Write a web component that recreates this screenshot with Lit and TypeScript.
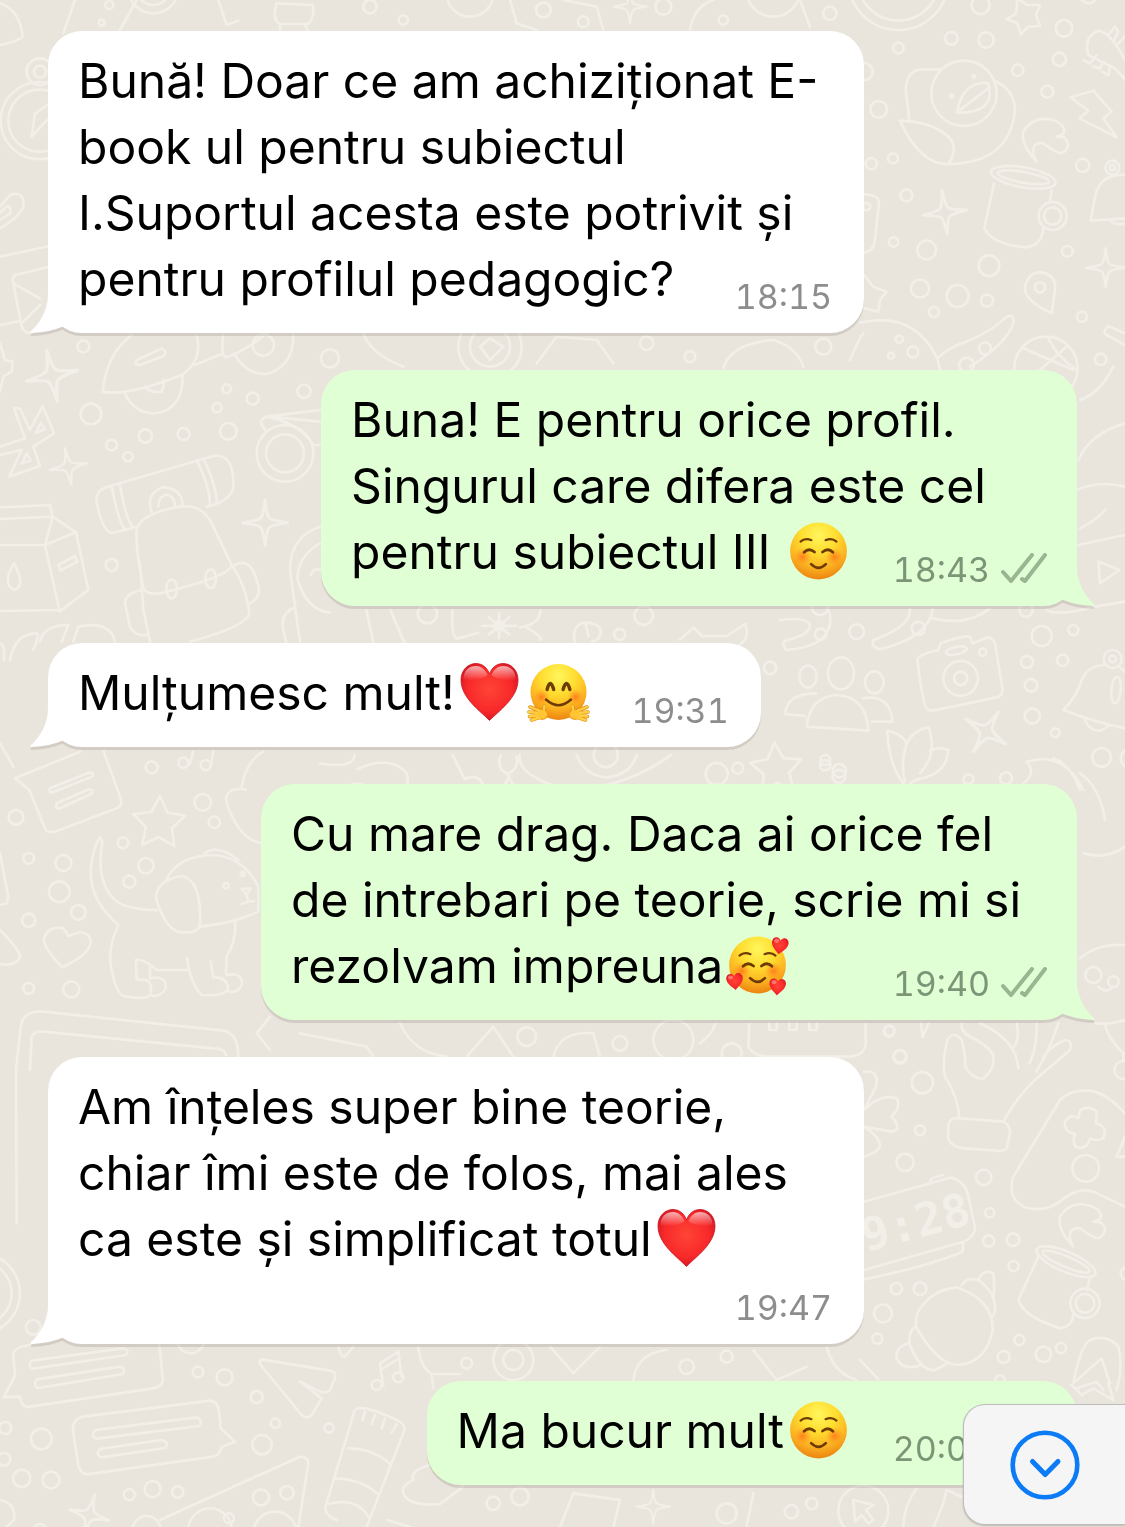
import { LitElement, html, svg, css, nothing } from "lit";
import { customElement, property } from "lit/decorators.js";

type EmojiName = "smile" | "heart" | "hug" | "hearts";
type Piece = string | { emoji: EmojiName };

interface Message {
  side: "in" | "out";
  time: string;
  wide?: boolean;
  timeBelow?: boolean;
  lines: Piece[][];
}

const messages: Message[] = [
  {
    side: "in",
    time: "18:15",
    wide: true,
    lines: [
      ["Bună! Doar ce am achiziționat E-"],
      ["book ul pentru subiectul"],
      ["I.Suportul acesta este potrivit și"],
      ["pentru profilul pedagogic?"],
    ],
  },
  {
    side: "out",
    time: "18:43",
    lines: [
      ["Buna! E pentru orice profil."],
      ["Singurul care difera este cel"],
      ["pentru subiectul III ", { emoji: "smile" }],
    ],
  },
  { side: "in", time: "19:31", lines: [["Mulțumesc mult!", { emoji: "heart" }, { emoji: "hug" }]] },
  {
    side: "out",
    time: "19:40",
    wide: true,
    lines: [
      ["Cu mare drag. Daca ai orice fel"],
      ["de intrebari pe teorie, scrie mi si"],
      ["rezolvam impreuna", { emoji: "hearts" }],
    ],
  },
  {
    side: "in",
    time: "19:47",
    wide: true,
    timeBelow: true,
    lines: [
      ["Am înțeles super bine teorie,"],
      ["chiar îmi este de folos, mai ales"],
      ["ca este și simplificat totul", { emoji: "heart" }],
    ],
  },
  { side: "out", time: "20:01", lines: [["Ma bucur mult", { emoji: "smile" }]] },
];

/* ---------- emoji ---------- */

const faceDefs = svg`
  <defs>
    <radialGradient id="face" cx="50%" cy="22%" r="78%">
      <stop offset="0" stop-color="#fff65c"></stop>
      <stop offset=".4" stop-color="#ffdd30"></stop>
      <stop offset=".72" stop-color="#fcb522"></stop>
      <stop offset="1" stop-color="#ec8410"></stop>
    </radialGradient>
    <radialGradient id="cheek">
      <stop offset="0" stop-color="#ff6f1a" stop-opacity=".8"></stop>
      <stop offset="1" stop-color="#ff8a1e" stop-opacity="0"></stop>
    </radialGradient>
    <radialGradient id="red" cx="50%" cy="45%" r="65%">
      <stop offset="0" stop-color="#ff4436"></stop>
      <stop offset=".6" stop-color="#f8292a"></stop>
      <stop offset="1" stop-color="#c30f1d"></stop>
    </radialGradient>
    <linearGradient id="gloss" x1="0" y1="0" x2="0" y2="1">
      <stop offset="0" stop-color="#fff" stop-opacity=".65"></stop>
      <stop offset="1" stop-color="#fff" stop-opacity="0"></stop>
    </linearGradient>
  </defs>`;

const heartPath =
  "M30 58.5C21 49 1.5 36 1.5 18C1.5 8 8.5 1.5 16.5 1.5C23 1.5 28 6 30 12C32 6 37 1.5 43.5 1.5C51.5 1.5 58.5 8 58.5 18C58.5 36 39 49 30 58.5Z";

const smallHeart = (x: number, y: number, turn: number) => svg`
  <g transform="translate(${x} ${y}) rotate(${turn}) scale(.29) translate(-30 -30)">
    <path d=${heartPath} fill="url(#red)"></path>
    <ellipse cx="17" cy="14" rx="9" ry="7" fill="#ff8d83" opacity=".7"></ellipse>
  </g>`;

const blushFace = svg`
  <circle cx="30" cy="30" r="28.4" fill="url(#face)"></circle>
  <circle cx="14" cy="36" r="9" fill="url(#cheek)"></circle>
  <circle cx="46" cy="36" r="9" fill="url(#cheek)"></circle>
  <g fill="none" stroke="#6e3b06" stroke-linecap="round" stroke-width="2.1">
    <path d="M12 20.6Q16.6 16.4 23 19.2M48 20.6Q43.4 16.4 37 19.2"></path>
    <path d="M15.6 31.2Q20.5 26.4 26 31M34 31Q39.5 26.4 44.4 31.2" stroke-width="2.8"></path>
    <path d="M22.6 43.2Q30 50.6 37.4 43.2" stroke-width="2.6"></path>
  </g>`;

const hand = svg`
  <g stroke-linecap="round" fill="none">
    <path d="M12 55L3 58M11 53L1 54.500M11 51L.5 50M12 49L1.500 45M15 50L16 44" stroke="#e08a12" stroke-width="3.600"></path>
    <ellipse cx="13.500" cy="53" rx="6" ry="5" fill="#f0a01e"></ellipse>
    <path d="M12 55L3 58M11 53L1 54.500M11 51L.5 50M12 49L1.500 45M15 50L16 44" stroke="#ffd042" stroke-width="2.400"></path>
    <ellipse cx="13.500" cy="52.500" rx="5" ry="4.200" fill="#ffc534"></ellipse>
  </g>`;

const emojiArt: Record<EmojiName, { label: string; art: unknown }> = {
  smile: { label: "☺️", art: blushFace },
  heart: {
    label: "❤️",
    art: svg`
      <path d=${heartPath} fill="url(#red)" stroke="#c4141f" stroke-width=".8"></path>
      <path d="M4 17C4 8 10 4 16.500 4C22 4 26 8 28 13C25 17 8 20 4 17Z" fill="url(#gloss)"></path>
      <path d="M56 17C56 8 50 4 43.500 4C38 4 34 8 32 13C35 17 52 20 56 17Z" fill="url(#gloss)"></path>`,
  },
  hug: {
    label: "🤗",
    art: svg`
      <circle cx="30" cy="30" r="28" fill="url(#face)"></circle>
      <circle cx="13" cy="35" r="8" fill="url(#cheek)"></circle>
      <circle cx="47" cy="35" r="8" fill="url(#cheek)"></circle>
      <g fill="none" stroke="#6e3b06" stroke-linecap="round">
        <path d="M18.600 27.500Q21.700 15.500 25.200 27.500M34.600 27.500Q38 15.500 41.400 27.500" stroke-width="3.400"></path>
        <path d="M17.500 37.500Q30 49 42.500 37.500" stroke-width="2.500"></path>
      </g>
      ${hand}
      <g transform="matrix(-1 0 0 1 60 0)">${hand}</g>`,
  },
  hearts: {
    label: "🥰",
    art: svg`${blushFace}${smallHeart(52.3, 11, 8)}${smallHeart(7.300, 46.7, -6)}${smallHeart(50, 52, 4)}`,
  },
};

const emoji = (name: EmojiName) => html`<svg
  class="emoji" viewBox="-4.500 -2 69 66" role="img" aria-label=${emojiArt[name].label}
>${faceDefs}${emojiArt[name].art}</svg>`;

/* ---------- wallpaper ---------- */

interface Patch {
  x: number;
  y: number;
  scale?: number;
  rings: string;
  sparkles?: string;
  stars?: string;
  ovals?: string;
  paths: string;
}

const three = (s: string) => s.trim().split(/\s+/).map((t) => t.split(",").map(Number));

const ring = ([x, y, r]: number[]) => svg`<circle cx=${x} cy=${y} r=${r}></circle>`;

const oval = ([x, y, rx, ry, turn = 0]: number[]) =>
  svg`<ellipse cx=${x} cy=${y} rx=${rx} ry=${ry} transform="rotate(${turn} ${x} ${y})"></ellipse>`;

const sparkle = ([x, y, r, turn = 0]: number[]) => svg`
  <path transform="translate(${x} ${y}) rotate(${turn}) scale(${r / 60})"
    d="M0 -60Q5 -16 12 -12Q18 -6 60 0Q18 6 12 12Q5 18 0 60Q-5 18 -12 12Q-18 6 -60 0Q-18 -6 -12 -12Q-5 -16 0 -60Z"></path>`;

const star = ([x, y, r, turn = 0]: number[]) => {
  const pts = Array.from({ length: 10 }, (_, i) => {
    const a = ((i * 36 - 90 + turn) * Math.PI) / 180;
    const d = i % 2 ? r * 0.5 : r;
    return `${(x + Math.cos(a) * d).toFixed(1)} ${(y + Math.sin(a) * d).toFixed(1)}`;
  });
  return svg`<path d="M${pts.join("L")}Z"></path>`;
};

const patches: Patch[] = [
  {
    x: 0, y: 0,
    rings: "328,15,12 305,68,9 460,-35,75 460,-35,50 120,215,40 120,215,18 118,362,116 118,362,93",
    paths:
      "M0 10Q60 30 68 110Q50 125 0 135M225 0L190 100M410 0L360 90M830 10Q815 60 840 72H925Q945 50 938 15ZM840 75V95M915 75L925 95M655 0L680 75L715 62M95 410L105 340L150 310M95 410L150 350" +
      "M0 620L30 585Q75 570 70 620Q60 650 0 685M0 640L20 618Q35 620 30 640L0 660M0 770L150 738M150 800L45 825Q35 835 40 850L65 980Q70 1000 100 1000M40 850L120 895M65 970L120 915M0 975L60 963",
  },
  {
    x: 860, y: 0,
    rings:
      "115,-60,150 115,-60,122 362,15,27 612,85,25 274,115,19 378,120,23 115,144,16 12,215,26 56,328,25 598,178,20 473,211,17 562,275,18 668,496,20 99,475,15 34,491,17 139,586,18 101,726,14 200,750,28 387,797,31 622,754,16 180,866,27 293,888,33 381,902,18 222,936,15 666,950,15 722,1078,17 118,1018,11 159,1056,16 93,1067,9 312,280,98 342,229,4 275,288,4 578,648,42 578,648,26 757,503,21 757,503,8 540,862,15 375,1045,18 320,1095,22 558,1105,95 20,620,11",
    sparkles: "254,638,66,-7 737,803,58",
    ovals: "490,532,98,30,10 490,532,78,16,10",
    paths:
      "M472 0L468 40L440 58L472 70L482 102L505 80L540 78L528 45L540 15L500 15L480 0M240 208H185Q140 210 137 270L148 360M400 240Q465 270 465 330Q450 490 265 492Q180 495 120 362Q220 365 270 415Q295 450 265 492M290 338Q310 240 385 250Q410 340 290 338L388 262" +
      "M632 292L700 272L755 335L730 355L770 412L658 355L685 332ZM530 485Q480 430 490 395Q520 345 580 360Q620 375 610 402L590 410L612 412Q640 440 605 460Q590 460 550 430Q515 425 520 462Z" +
      "M402 550L373 685Q400 735 500 742Q545 735 550 685M575 570L570 605M795 525Q720 520 705 590L692 662L795 655M750 660Q770 680 795 670M575 940Q490 900 495 860Q505 815 545 817Q590 825 585 870Z" +
      "M232 1075Q260 1045 330 1020Q400 990 440 950Q465 940 460 970Q440 1030 330 1100M0 968Q160 930 232 1075L240 1110M490 1045L640 1110M565 1015Q590 1070 650 1110M620 1040L540 1110M12 825L40 860L80 875L60 900L55 935L12 925M12 583Q60 585 57 610L45 720Q40 755 12 758" +
      "M795 238L765 205L685 165Q670 110 715 92Q750 95 795 180M670 180L690 190L710 165M700 200L720 205L730 185M725 215L745 225L750 200M745 105L765 80L775 95L760 125M775 130L795 110M795 1000L745 978Q725 995 740 1005L795 1035M665 0Q690 20 705 0",
  },
  {
    x: 0, y: 330,
    rings:
      "250,49,18 273,252,31 680,176,13 758,206,18 651,233,14 912,184,20 685,304,25 436,318,20 551,312,18 335,345,16 384,380,14 335,705,18 790,45,32 855,370,85 855,370,57 990,85,27",
    sparkles: "156,137,78,-12 205,410,56,-10 795,578,68",
    ovals: "515,777,16,28 632,746,16,28",
    paths:
      "M395 15Q320 70 308 185Q380 200 545 135Q610 90 590 15M585 105L670 70M375 190Q400 250 465 250Q550 240 548 135M435 170Q450 190 485 185Q495 160 490 150M410 90L485 55Q505 65 490 78L420 105Q400 105 410 90Z" +
      "M670 15Q660 80 680 82Q740 60 800 10M705 75Q740 135 800 132Q880 110 880 15M0 40L15 90L38 95L35 125L10 140L0 185M0 350L75 325L42 235L60 235L90 300L128 228L162 310L100 350L120 408L28 440L65 360L0 375M108 308L122 280L135 298ZM65 400L80 370L92 392Z" +
      "M0 532L150 525L158 560L0 567M158 560L228 607L135 645L0 645M158 560L135 645L178 840L0 843M228 607L265 780L178 845M42 700Q5 760 42 780Q80 770 42 700ZM175 705L225 678L232 695L182 722Z" +
      "M405 592L335 610Q305 600 290 515Q285 480 330 468L640 378Q700 370 700 460Q705 500 640 525L620 530M335 470Q360 590 375 597M360 465Q380 580 400 590M590 390Q630 470 630 525M610 385Q650 470 650 515M455 545Q435 490 490 472Q545 475 548 525M475 530Q475 498 500 494Q522 498 525 525" +
      "M430 775Q405 640 410 600Q420 550 540 530Q610 520 640 590L695 705Q690 740 480 790Q440 795 430 775M420 700L430 840L450 935M695 705Q740 770 748 850Q740 890 570 935M425 780Q375 790 375 820L390 890Q405 920 440 915M705 705Q750 680 770 750Q790 800 750 820" +
      "M795 300Q770 270 800 260L960 240M800 260Q900 280 940 345H960M830 262L960 275M960 590Q870 620 870 720L900 935M960 640Q890 680 893 750Q920 840 990 848M885 832Q840 850 850 900L858 935M932 735Q940 710 965 722" +
      "M0 940Q15 940 12 990M30 990Q45 910 110 910Q120 910 100 960M120 935Q130 885 205 885L185 935M220 935L235 890Q330 870 345 935",
  },
  {
    x: 780, y: 510,
    rings:
      "230,365,22 785,378,30 880,360,15 741,456,18 848,451,17 753,526,19 757,618,23 826,668,13 965,742,28 136,750,15 178,782,20 565,808,15 678,805,18 738,300,20 542,505,52 542,505,20 608,427,11 998,447,27 998,447,10 122,372,17 120,290,25 415,355,20 1050,745,28",
    sparkles: "618,665,70,32",
    ovals: "84,500,26,33 183,490,39,48 283,517,28,33 1008,540,14,40,5 529,422,32,11,-12",
    paths:
      "M80 650Q90 560 170 555Q260 560 265 662ZM108 550Q20 550 15 612L75 618M248 565Q330 550 338 635L275 635M445 600Q430 600 412 450Q410 435 475 420L482 400Q550 375 570 380L578 400L625 382Q640 385 645 400L668 540Q665 560 650 562L460 602Z" +
      "M370 820Q325 760 322 662Q365 670 380 700Q400 660 445 652Q475 730 420 790M380 700Q360 760 375 815M450 720Q480 710 505 720Q500 790 425 805Q390 810 375 840M970 465Q920 470 905 510Q890 560 850 600Q940 635 1035 655M1015 468L1035 485M915 630Q930 665 960 662Q980 655 985 645" +
      "M740 755Q850 720 910 840M740 755Q770 790 730 820M820 745Q870 760 900 840M0 330Q80 320 90 345Q90 375 20 390Q0 400 20 420Q140 410 150 340Q155 310 140 295M390 295Q395 350 280 390Q270 410 300 418Q450 380 458 295M458 325Q560 350 630 295" +
      "M895 105L1035 75M900 55Q950 30 975 0M955 155L960 220L1018 180ZM800 300Q830 320 945 290L1035 275M890 -60Q960 -90 1035 -70M895 -150Q930 -230 1035 -260M900 -330Q960 -350 1000 -430",
  },
  {
    x: 320, y: 600, scale: 2.904,
    rings:
      "940,45,27 870,100,16 1307,197,18 1152,505,32 1213,488,16 1467,480,15 1507,512,19 312,40,28 830,450,35 520,75,14",
    stars: "1325,492,78,-4",
    paths:
      "M385 30Q380 110 400 112L460 95M600 80Q650 110 640 115M470 75L570 75M520 40V110M490 50L550 100M550 50L490 100M580 80Q640 70 640 30M135 30L155 125M205 30L245 125M740 125Q730 70 770 65Q820 70 815 95Q810 120 790 120M770 65L780 105M1045 115L1085 80L1110 105H1180L1235 70Q1250 110 1220 128" +
      "M100 450Q100 490 0 475M110 490Q200 450 250 500Q260 520 250 550M80 545Q110 520 150 550M385 450L420 520Q470 500 475 550M580 450Q570 500 680 540Q850 570 1020 450M745 450Q770 510 830 515Q900 510 920 450M545 510L570 550M550 510L530 550M525 450Q510 490 545 505Q580 490 570 455",
  },
  {
    x: 0, y: 740,
    rings:
      "455,82,18 48,232,22 608,187,25 643,247,17 369,308,16 86,355,16 190,369,24 438,377,23 388,425,18 178,455,31 235,517,22 86,541,20 86,745,16 214,748,24 678,437,8 728,402,6 550,68,15 617,75,15",
    stars: "477,250,82,2",
    paths:
      "M240 35L45 115L88 150L135 265Q140 280 165 275L350 205Q370 195 362 175L310 32M150 145L270 97Q285 100 275 110L155 158Q145 155 150 145ZM170 190L268 148Q285 150 272 163L180 205Q165 208 170 190ZM188 682Q130 625 132 595Q145 555 190 565L205 588L240 577Q275 580 272 610Q265 645 188 682Z" +
      "M355 555Q270 480 272 395Q275 330 300 292Q310 300 305 320Q290 430 345 480Q380 510 470 510M545 408Q470 420 468 475Q500 580 550 577Q600 580 600 550Q605 420 545 408ZM500 415Q540 345 640 345Q730 350 775 440V515Q700 550 600 560M615 340Q650 310 715 360M725 447L752 445L740 465ZM740 465L745 485L725 492M745 485L762 483" +
      "M355 555Q320 630 335 690Q350 770 380 770Q440 780 450 765Q460 730 440 720L410 718L408 660Q430 655 470 690H562M562 655Q570 730 605 765Q670 770 685 745Q680 710 640 712L632 665M705 545Q710 600 680 650L678 700M450 715Q500 705 497 745Q480 775 450 765M450 680V712M680 705Q730 695 725 735Q710 765 680 752" +
      "M725 140Q740 60 790 35M738 148Q670 140 680 190Q720 300 780 308M580 35L568 75M640 35L632 78M0 340L25 470L20 490L0 495M0 570Q60 630 60 650Q50 680 0 672M50 1450L48 990L62 860Q70 810 130 815L670 872Q715 880 715 950M90 990L95 890Q105 870 130 875L640 925Q675 925 678 945M0 10L40 80M810 830L770 880L810 930",
  },
  {
    x: 700, y: 920,
    rings: "568,332,15 600,411,20 95,400,30 1180,165,24 1240,185,16 -80,360,60 -240,370,22 -520,350,28",
    paths:
      "M148 312L145 380Q160 408 200 410H450Q495 405 497 370V312M208 310V330H230V310M268 310V330H290V310M328 310V330H350V310M1140 115Q1190 70 1275 75M1195 200Q1215 220 1235 205M-1200 340L-1000 380L-980 410M-900 310Q-860 400 -760 410M-700 410L-620 320L-560 410M-440 410Q-420 330 -320 340L-300 410M0 370Q40 340 45 312M1140 -440Q1200 -400 1215 -300M1150 -200Q1220 -180 1275 -220",
  },
  {
    x: 860, y: 1010,
    rings:
      "87,64,16 120,139,19 187,218,32 180,361,15 135,457,26 371,502,23 389,608,14 386,693,17 459,689,19 461,768,15 109,836,17 180,836,19 69,910,27 52,986,15 478,990,15 431,1041,18 550,1033,23 603,1014,15 677,475,40 675,880,44 675,880,28 790,180,27 800,790,18 420,1110,14",
    ovals: "618,755,95,30,23 618,755,76,16,23",
    paths:
      "M298 325Q295 260 255 200Q245 160 262 90Q280 60 305 90Q318 140 315 170Q340 210 370 205Q405 180 400 135Q385 110 350 90Q300 70 305 40M360 40Q470 90 475 175M470 40Q480 90 462 110M530 40Q530 120 508 160M595 40Q565 130 528 185M430 335Q470 260 530 205L630 120Q640 85 610 92Q570 110 550 140M183 40L188 82L205 40" +
      "M265 345Q270 320 300 325L430 335Q450 345 450 370L440 415Q430 425 410 422L310 415Q260 405 265 375ZM795 310Q730 240 680 242Q630 240 600 270L460 500Q440 560 490 590Q550 610 600 575Q650 530 700 545L795 590M660 300Q690 285 710 305L708 340Q745 350 730 385Q710 395 690 385Q680 420 650 412Q635 400 645 372Q610 365 615 335Q630 310 655 325Z" +
      "M12 185Q60 180 48 230L12 300Q60 250 110 265Q125 290 95 320Q130 360 95 365L12 350Q60 380 60 410Q50 430 12 440M12 575L270 503Q315 510 325 560L345 650Q345 680 310 695L12 780M310 695L308 725Q200 770 12 808M210 515Q215 500 250 495" +
      "M640 710Q590 655 600 620Q630 570 690 587Q730 600 720 627L700 635L722 637Q750 665 715 685Q700 685 660 655Q625 650 630 687ZM535 740L475 870Q490 920 600 955Q640 950 640 910M690 805L680 840" +
      "M185 890Q220 840 290 832Q400 870 398 960Q380 1060 290 1065Q230 1060 168 950Q165 910 185 890M305 825Q320 800 355 810Q410 850 405 905L398 920M355 810Q370 775 400 790Q405 820 400 870M168 950Q145 960 148 1000Q180 1085 225 1080L260 1062M145 1000Q105 1010 110 1045Q130 1085 185 1065" +
      "M640 1120Q660 1010 690 990Q740 970 775 1010Q790 1070 770 1140M640 1120L725 1045L750 1120M650 1135L710 1115L730 1140M0 1050L55 1108M735 40Q740 80 790 130V150M795 380L770 440H795M705 40Q750 45 795 30",
  },
  {
    x: 0, y: 1300,
    rings:
      "-60,-20,120 -60,-20,95 100,82,22 572,120,40 594,216,16 674,232,24 770,291,18 826,370,14 987,384,14 124,417,31 786,434,29 16,384,18 12,478,19 65,535,26 153,540,25 388,584,17 458,567,24 533,576,17 783,592,24 861,578,20 687,655,15 630,690,65 825,700,65 440,690,42 1130,255,15 1195,232,15 1540,180,60 1540,180,30 1400,190,16 2060,200,22 2180,170,18 1480,610,20 1560,590,26 2180,640,30 120,690,18",
    sparkles: "268,645,62,15 1960,620,50",
    paths:
      "M95 135Q35 140 40 170L45 225L12 292L60 290Q65 325 90 320L460 265Q490 260 488 235L478 135M95 182L370 145Q390 150 378 165L100 206Q80 200 95 182ZM110 238L360 200Q380 205 368 222L115 264Q98 258 110 238Z" +
      "M250 350L630 302Q655 305 658 340L662 385L705 425L665 440Q660 465 640 470L260 523Q240 520 235 495L218 385Q220 355 250 350ZM285 390L590 352Q610 360 598 378L290 416Q270 410 285 390ZM300 447L485 420Q510 428 495 444L305 472Q285 465 300 447Z" +
      "M785 178L990 212Q1010 215 1005 235L990 270Q980 282 960 275L900 245L965 295L935 345Q920 360 905 345L782 195Q775 180 785 178ZM1150 258L1140 190L1195 155L1205 230M1142 210L1197 175" +
      "M1010 660Q980 650 975 625L1060 345Q1060 330 1075 325Q1110 320 1200 365Q1220 380 1210 400L1100 680M1045 445Q1120 445 1170 492M1010 535Q1090 540 1130 580M985 612Q1070 590 1105 650M1095 335L1088 360M1125 345L1115 372M1155 355L1145 385M1190 372L1175 398M480 660L900 470Q925 470 925 490L895 681" +
      "M1290 495Q1230 510 1240 540Q1195 560 1215 590Q1240 620 1320 612L1390 560M1255 140Q1260 200 1295 222H1380M1295 222L1300 265M1160 660L1230 681M1015 140Q1020 170 1035 170L1060 140M0 600Q50 610 42 660L20 681M1650 140L1720 220L1800 140M1900 240Q1910 160 2000 150M2260 150L2330 240L2420 200M2480 140Q2500 220 2570 240M1680 681L1720 580L1860 600L1840 681M2260 580L2240 681",
  },
  {
    x: 780, y: 1380,
    rings: "34,395,20 95,371,17 250,392,75",
    paths:
      "M220 360L280 375L258 390L280 420L265 430L245 405L225 425ZM410 325Q370 380 370 441M460 441Q490 380 500 330L545 350M875 15L905 45L940 25L1000 60L985 10",
  },
  {
    x: 330, y: 0,
    rings: "120,20,20 220,60,14 420,-20,70 640,30,22 760,65,16 1000,20,24 1180,60,14 1330,-30,80 1500,40,20 480,1040,95 480,1040,60 950,1030,20 1080,1070,16 1480,1040,24",
    sparkles: "900,20,50",
    paths:
      "M540 0L560 70L620 90M820 90L800 20L700 0M1080 90Q1090 20 1150 0M1410 0L1440 80M100 1000Q120 1060 220 1100M620 1090L680 1010L800 1020L850 1090M1180 1105Q1200 1030 1330 1020Q1400 1040 1420 1100M1560 1080Q1590 1010 1600 1000M450 1040L480 1015L520 1040L480 1080Z",
  },
];

const wallpaper = html`
  <svg class="wallpaper" viewBox="0 0 1125 1527" preserveAspectRatio="xMidYMin slice" aria-hidden="true">
    ${patches.map(
      (p) => svg`
        <g transform="translate(${p.x} ${p.y}) scale(${1 / (p.scale ?? 3)})">
          ${three(p.rings).map(ring)}
          ${p.sparkles ? three(p.sparkles).map(sparkle) : nothing}
          ${p.stars ? three(p.stars).map(star) : nothing}
          ${p.ovals ? three(p.ovals).map(oval) : nothing}
          <path d=${p.paths}></path>
        </g>`,
    )}
    <text class="clock" transform="translate(866 1252) rotate(-15)">9:28</text>
  </svg>`;

/* ---------- elements ---------- */

@customElement("chat-bubble")
export class ChatBubble extends LitElement {
  @property({ attribute: false }) message!: Message;

  static styles = css`
    :host {
      display: block;
    }
    .row {
      display: flex;
      padding: 0 48px;
    }
    .row.out {
      justify-content: flex-end;
    }
    .bubble {
      position: relative;
      display: grid;
      box-sizing: border-box;
      max-width: 100%;
      border-radius: 34px;
      background: #ffffff;
      color: #000000;
      filter: drop-shadow(0 3px 0 rgba(70, 60, 50, 0.14));
    }
    .out .bubble {
      background: #e1ffd4;
    }
    .wide {
      width: 816px;
    }
    .text {
      grid-area: 1 / 1;
      margin: 0;
      padding: 17px 30px 21px;
      font-size: 48px;
      line-height: 66px;
    }
    .line {
      display: block;
      white-space: pre-wrap;
    }
    .spacer {
      display: inline-block;
      width: 138px;
    }
    .out .spacer {
      width: 194px;
    }
    .emoji {
      width: 69px;
      height: 66px;
      vertical-align: top;
      overflow: visible;
    }
    .meta {
      grid-area: 1 / 1;
      place-self: end;
      display: flex;
      align-items: flex-end;
      gap: 11px;
      margin: 0 32px 19px 0;
      color: #8d8d8d;
      font-size: 34px;
      line-height: 34px;
      font-variant-numeric: tabular-nums;
    }
    .out .meta {
      margin-right: 30px;
      color: #7c9577;
    }
    .below .text {
      padding-bottom: 0;
    }
    .below .meta {
      grid-area: 2 / 1;
      margin-top: 19px;
    }
    .ticks {
      width: 46px;
      height: 30px;
      margin-bottom: 4px;
      fill: none;
      stroke: #9ab592;
      stroke-width: 4;
      stroke-linecap: round;
      stroke-linejoin: round;
    }
    .tail {
      position: absolute;
      left: -18px;
      bottom: 0;
      width: 50px;
      height: 40px;
      fill: #ffffff;
    }
    .out .tail {
      left: auto;
      right: -18px;
      transform: scaleX(-1);
      fill: #e1ffd4;
    }
  `;

  render() {
    const m = this.message;
    const last = m.lines.length - 1;
    return html`
      <div class="row ${m.side}">
        <article class="bubble ${m.wide ? "wide" : ""} ${m.timeBelow ? "below" : ""}">
          <svg class="tail" viewBox="0 0 50 40" aria-hidden="true">
            <path d="M18 0C18 18 10 30 .5 38.500Q0 40 2 40Q20 39 33 33.500L46 16V0Z"></path>
          </svg>
          <p class="text">
            ${m.lines.map(
              (line, i) => html`<span class="line">${line.map((p) => (typeof p === "string" ? p : emoji(p.emoji)))}${
                i === last && !m.wide ? html`<span class="spacer"></span>` : nothing
              }</span>`,
            )}
          </p>
          <div class="meta">
            <time>${m.time}</time>
            ${m.side === "out"
              ? html`<svg class="ticks" viewBox="0 0 46 30" role="img" aria-label="Delivered">
                  <path d="M2 19L10 28L31 2M21 26L24 28L44 2"></path>
                </svg>`
              : nothing}
          </div>
        </article>
      </div>
    `;
  }
}

@customElement("app-root")
export class AppRoot extends LitElement {
  static styles = css`
    :host {
      display: block;
      font-family: Inter, "Liberation Sans", sans-serif;
    }
    .chat {
      position: relative;
      overflow: hidden;
      min-height: 100vh;
      box-sizing: border-box;
      padding: 31px 0 42px;
      background: #e9e5dd;
    }
    .wallpaper {
      position: absolute;
      inset: 0;
      width: 100%;
      height: 100%;
      fill: none;
      stroke: #f2eee8;
      stroke-width: 8;
      stroke-linecap: round;
      stroke-linejoin: round;
    }
    .clock {
      fill: #f2eee8;
      stroke: none;
      font-family: "DejaVu Sans Mono", monospace;
      font-size: 46px;
      font-weight: 700;
    }
    .messages {
      position: relative;
      display: flex;
      flex-direction: column;
      gap: 37px;
    }
    .jump {
      position: absolute;
      right: 0;
      bottom: 2px;
      display: flex;
      align-items: center;
      justify-content: center;
      width: 162px;
      height: 121px;
      padding: 0;
      border: 1px solid #bdbdbb;
      border-right: 0;
      border-radius: 22px 0 0 22px;
      background: #f5f5f5;
      box-shadow: 0 1px 2px rgba(0, 0, 0, 0.2);
      cursor: pointer;
    }
    .jump svg {
      width: 70px;
      height: 70px;
      fill: none;
      stroke: #0b7bf6;
      stroke-linecap: round;
      stroke-linejoin: round;
    }
  `;

  render() {
    return html`
      <main class="chat">
        ${wallpaper}
        <div class="messages">
          ${messages.map((m) => html`<chat-bubble .message=${m}></chat-bubble>`)}
        </div>
        <button class="jump" type="button" aria-label="Scroll to latest message">
          <svg viewBox="0 0 70 70" aria-hidden="true">
            <circle cx="35" cy="35" r="32.300" stroke-width="4.600"></circle>
            <path d="M22.500 31.500L35.200 44.500L48 31.500" stroke-width="5"></path>
          </svg>
        </button>
      </main>
    `;
  }
}
